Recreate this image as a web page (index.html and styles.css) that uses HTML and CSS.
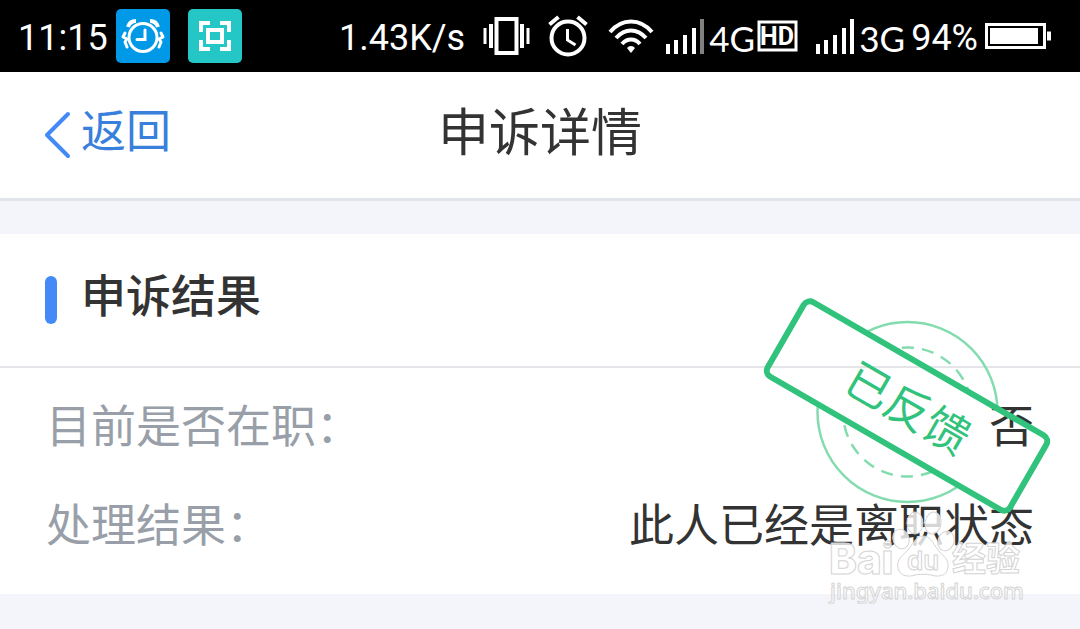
FILE: index.html
```html
<!DOCTYPE html>
<html lang="zh-CN">
<head>
    <meta charset="UTF-8">
    <meta name="viewport" content="width=device-width, initial-scale=1.0">
    <title>申诉详情</title>
    <link rel="stylesheet" href="styles.css">
</head>
<body>
    <!-- 状态栏 -->
    <div class="status-bar">
        <div class="status-left">
            <span class="clock">11:15</span>
            <svg class="app-icon" width="54" height="54" viewBox="0 0 54 54" fill="none" stroke="#fff" stroke-width="3">
                <rect width="54" height="54" rx="5" fill="#0099e8" stroke="none"/>
                <circle cx="27" cy="28.500" r="14"/>
                <path d="M29 21v9.500h-8" stroke-linecap="round"/>
                <path d="M12 18c1-3.500 4-6 8-6M34 12c4 0 7 2.500 8 6" stroke-width="4"/>
                <path d="M9 24l-2 4 4 2-2 3 2 5M45 24l2 4-4 2 2 3-2 5" stroke-linejoin="round" stroke-linecap="round"/>
            </svg>
            <svg class="app-icon" width="54" height="54" viewBox="0 0 54 54" fill="none" stroke="#fff" stroke-width="4">
                <rect width="54" height="54" rx="5" fill="#25c6c6" stroke="none"/>
                <path d="M13 23v-9h9M32 14h9v9M41 31v9h-9M22 40h-9v-9"/>
                <rect x="20" y="21" width="14" height="12"/>
            </svg>
        </div>
        <div class="status-right">
            <span class="speed">1.43K/s</span>
            <svg width="48" height="40" viewBox="0 0 48 40" fill="none" stroke="#fff">
                <rect x="13.500" y="3" width="20" height="34" stroke-width="4"/>
                <path d="M2 12v16M45 12v16" stroke-width="3"/>
                <path d="M8 8v24M39 8v24" stroke-width="4"/>
            </svg>
            <svg class="alarm" width="40" height="42" viewBox="0 0 40 42" fill="none" stroke="#fff" stroke-width="4">
                <circle cx="20" cy="23" r="16.500"/>
                <path d="M19.500 14v11l8 5" stroke-width="3"/>
                <path d="M1.500 9.500l9-7.500M29.500 2l9 7.500"/>
            </svg>
            <svg class="wifi" width="46" height="36" viewBox="0 0 46 36" fill="none" stroke="#fff" stroke-width="4">
                <path d="M2 14c12-14 30-14 42 0M8 20c9-10 21-10 30 0M14 26c5-6 13-6 18 0"/>
                <path d="M23 35l-4-5a5 5 0 0 1 8 0z" fill="#fff" stroke="none"/>
            </svg>
            <svg class="signal" width="40" height="36" viewBox="0 0 40 36" fill="#fff">
                <path d="M1 26h4v10H1zM9 22h4v14H9zM18 17h4v19h-4zM27 10h4v26h-4z"/>
                <path d="M35 1h4v35h-4z" fill="#808080"/>
            </svg>
            <span class="network">4G</span>
            <svg class="hd" width="42" height="32" viewBox="0 0 42 32">
                <rect x="2" y="2" width="37" height="28" fill="none" stroke="#fff" stroke-width="3"/>
                <text x="20" y="25" class="hd-text">HD</text>
            </svg>
            <svg class="signal" width="40" height="36" viewBox="0 0 40 36" fill="#fff">
                <path d="M1 26h4v10H1zM9 22h4v14H9zM18 17h4v19h-4zM27 10h4v26h-4zM35 1h4v35h-4z"/>
            </svg>
            <span class="network">3G</span>
            <span class="battery-text">94%</span>
            <svg width="68" height="28" viewBox="0 0 68 28" fill="none" stroke="#fff">
                <rect x="1.500" y="2.500" width="58" height="23" stroke-width="3"/>
                <rect x="5" y="6" width="48" height="16" fill="#fff" stroke="none"/>
                <path d="M64 9.500v9" stroke-width="4"/>
            </svg>
        </div>
    </div>

    <!-- 导航栏 -->
    <header class="nav">
        <a href="#" class="back">
            <svg width="28" height="48" viewBox="0 0 28 48" fill="none" stroke="#4489f8" stroke-width="4" stroke-linecap="round" stroke-linejoin="round">
                <path d="M24 3L3 24l21 21"/>
            </svg>
            返回
        </a>
        <h1>申诉详情</h1>
    </header>

    <!-- 申诉结果 -->
    <main class="card">
        <h2>申诉结果</h2>
        <dl class="rows">
            <div class="row">
                <dt>目前是否在职：</dt>
                <dd>否</dd>
            </div>
            <div class="row">
                <dt>处理结果：</dt>
                <dd>此人已经是离职状态</dd>
            </div>
        </dl>

        <!-- 已反馈印章 -->
        <svg class="stamp" width="300" height="230" viewBox="0 0 300 230" fill="none">
            <mask id="outside">
                <rect width="300" height="230" fill="#fff"/>
                <rect x="10" y="73" width="280" height="86" rx="7" fill="#000" transform="rotate(30 150 116)"/>
            </mask>
            <g mask="url(#outside)" stroke="#82dcae" stroke-width="2.500">
                <circle cx="150.500" cy="122" r="90"/>
                <circle cx="150.500" cy="122" r="64.500" stroke-dasharray="12 8.260" transform="rotate(-95 150.500 122)"/>
            </g>
            <g transform="rotate(30 150 116)">
                <rect x="10" y="73" width="280" height="86" rx="7" stroke="#31c37c" stroke-width="6"/>
                <text x="152" y="134" class="stamp-text">已反馈</text>
            </g>
        </svg>

        <!-- 水印 -->
        <svg class="watermark" width="204" height="100" viewBox="0 0 204 100">
            <g class="paw">
                <ellipse cx="79" cy="35" rx="8" ry="10" transform="rotate(-20 79 35)"/>
                <ellipse cx="93" cy="19" rx="8" ry="11"/>
                <ellipse cx="111" cy="19" rx="8" ry="11" transform="rotate(10 111 19)"/>
                <ellipse cx="124" cy="37" rx="8" ry="10" transform="rotate(20 124 37)"/>
                <path d="M101 32c-7 0-10 8-15 14-6 6-12 10-10 18 2 9 11 9 17 7 5-1 11-1 16 0 6 2 16 2 17-8 1-8-5-11-10-17-5-7-8-14-15-14z"/>
            </g>
            <text x="7" y="70" class="mark-latin">Bai</text>
            <text x="85" y="66" class="mark-du">du</text>
            <text x="130" y="67" class="mark-cn">经验</text>
            <text x="8" y="95" class="mark-url">jingyan.baidu.com</text>
        </svg>
    </main>
</body>
</html>
```

FILE: styles.css
```css
* {
    box-sizing: border-box;
}

body {
    min-height: 100vh;
    margin: 0;
    background-color: #f4f5fa;
    color: #333;
    font-family: "Noto Sans CJK SC", sans-serif;
}

/* 状态栏 */
.status-bar {
    display: flex;
    justify-content: space-between;
    align-items: center;
    height: 72px;
    padding: 0 27px 0 18px;
    background-color: #000;
    color: #fff;
    font-family: Roboto, sans-serif;
    font-size: 36px;
    line-height: 72px;
}

.status-left,
.status-right {
    display: flex;
    align-items: center;
    white-space: nowrap;
}

.clock,
.speed,
.network,
.battery-text {
    padding-top: 4px;
}

.app-icon {
    margin-left: 8px;
}

.app-icon + .app-icon {
    margin-left: 18px;
}

.speed {
    margin-right: 18px;
}

.alarm {
    margin-left: 17px;
}

.wifi {
    margin: 0 11px 0 20px;
}

.network {
    width: 44px;
    margin: 0 4px;
    font-family: Lato, sans-serif;
    font-size: 35px;
}

.hd {
    margin-right: 16px;
}

.hd-text {
    fill: #fff;
    font-size: 25px;
    font-weight: 700;
    text-anchor: middle;
}

.battery-text {
    margin: 0 7px 0 4px;
}

/* 导航栏 */
.nav {
    display: grid;
    grid-template-columns: 1fr auto 1fr;
    align-items: center;
    height: 129px;
    padding: 0 44px 12px;
    background-color: #fff;
    border-bottom: 3px solid #e1e4e9;
}

.back {
    display: flex;
    align-items: center;
    gap: 9px;
    color: #3880dc;
    font-size: 45px;
    line-height: 64px;
    text-decoration: none;
}

.back svg {
    margin-top: 12px;
}

h1 {
    margin: 0;
    font-size: 51px;
    font-weight: 400;
    line-height: 72px;
}

/* 结果卡片 */
.card {
    position: relative;
    margin-top: 33px;
    background-color: #fff;
}

h2 {
    display: flex;
    align-items: center;
    gap: 24px;
    height: 134px;
    margin: 0;
    padding: 0 45px 14px;
    border-bottom: 2px solid #e4e5e9;
    font-size: 45px;
    font-weight: 500;
}

h2::before {
    content: "";
    width: 12px;
    height: 48px;
    margin-top: 14px;
    border-radius: 6px;
    background-color: #4489f8;
}

.rows {
    margin: 0;
    padding: 6px 46px 22px;
}

.row {
    display: flex;
    justify-content: space-between;
    font-size: 45px;
    line-height: 99px;
}

dt {
    color: #999fa8;
}

dd {
    margin: 0;
}

/* 印章 */
.stamp {
    position: absolute;
    top: 56px;
    right: 23px;
}

.stamp-text {
    fill: #31c37c;
    font-size: 45px;
    text-anchor: middle;
}

/* 水印 */
.watermark {
    position: absolute;
    right: 54px;
    bottom: -10px;
    fill: rgba(255, 255, 255, 0.8);
    stroke: #d4d4d4;
    stroke-width: 1px;
}

.mark-latin,
.mark-du {
    font-family: Inter, sans-serif;
    font-size: 42px;
    font-weight: 800;
}

.mark-du {
    font-size: 26px;
    font-weight: 600;
}

.mark-cn {
    font-size: 34px;
    font-weight: 700;
}

.mark-url {
    font-family: "Noto Sans", sans-serif;
    font-size: 22px;
    font-weight: 500;
}
```
